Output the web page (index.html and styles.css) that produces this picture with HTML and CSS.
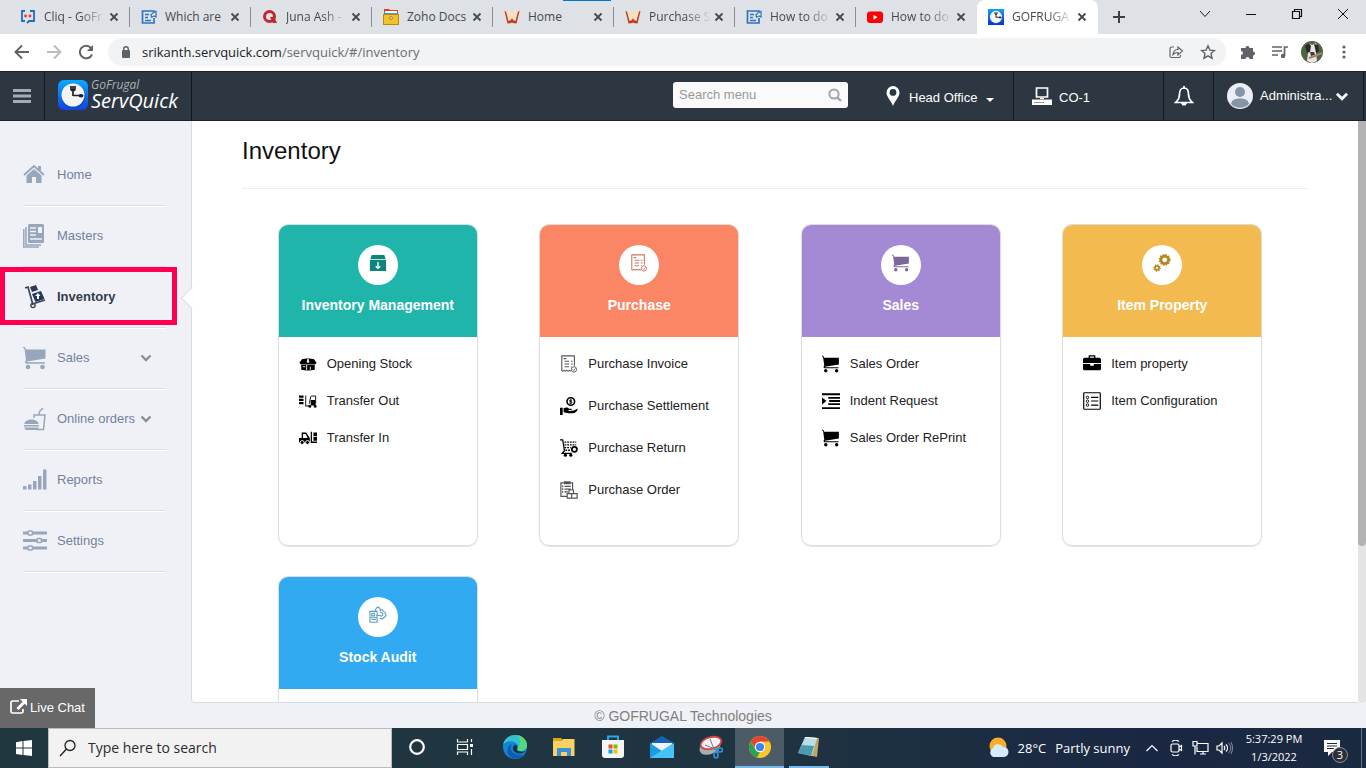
FILE: index.html
```html
<!DOCTYPE html>
<html lang="en">
<head>
<meta charset="utf-8">
<title>GOFRUGAL</title>
<link rel="stylesheet" href="styles.css">
</head>
<body>
<svg class="defs" aria-hidden="true">
  <symbol id="x" viewBox="0 0 10 10"><path d="M1.500 1.500l7 7M8.500 1.500l-7 7" fill="none" stroke="#45494d" stroke-width="1.800"/></symbol>
  <symbol id="cart" viewBox="0 0 24 24"><path d="M0 1.500c0-1 1.500-1 2 0L3 3.500h19.500v9L4 15.500v.8H22v1.400H3.500c-1 0-1.500-1-1.500-2l1-1.500L1.500 3z" fill="currentColor"/><circle cx="5" cy="21" r="2.300" fill="currentColor"/><circle cx="19.500" cy="21" r="2.300" fill="currentColor"/></symbol>
  <symbol id="chev" viewBox="0 0 12 8"><path d="M1.500 1.500L6 6l4.500-4.500" fill="none" stroke="currentColor" stroke-width="2.400"/></symbol>
  <symbol id="writer" viewBox="0 0 16 16"><path d="M13 9v5H1.500V2H13v1M4 5.500h4M4 8.500h3M4 11.500h6" fill="none" stroke="#2f74c0" stroke-width="1.700"/><path d="M15 2.500v5.500l-2-1-2.500 1-.5-2 2-2z" fill="#fff" stroke="#2f74c0" stroke-width="1.300"/></symbol>
  <symbol id="book" viewBox="0 0 16 16"><path d="M.5 2L3.500 14.500l4-.5.5-1 .5 1 4 .5L15.500 2l-1.500.5L11.500 12 9 11 8 9l-1 2-2.500 1L2 2.500z" fill="#c5391f"/><path d="M2.500 2L7 3l1 3 1-3 4.500-1L11 11.500 9 10 8 7.500 7 10l-2 1.500z" fill="#fbe0b4"/></symbol>
  <symbol id="invoice" viewBox="0 0 20 20"><path d="M12 18l-1.500-1L9 18l-1.500-1L6 18l-1.500-1L3 18l-1-.5V1h14v11M4 4h3M5 7h5M5 10h5M5 13h5M12 7h2M12 10h2M12 13h1" fill="none" stroke="currentColor" stroke-width="1.200"/><circle cx="15.500" cy="16" r="3" fill="none" stroke="currentColor"/><path d="M14 16l1.200 1.200 2-2.400" fill="none" stroke="currentColor"/></symbol>
  <symbol id="clockicon" viewBox="0 0 30 30"><circle cx="15.500" cy="16" r="12" fill="#0750be"/><circle cx="15" cy="15" r="11.500" fill="#f4f4f4"/><path d="M15 16V6M13 6v3c0 2 4 2 4 0V6M15 15.500h8" fill="none" stroke="#222" stroke-width="1.700"/><ellipse cx="23" cy="15.800" rx="2.500" ry="1.700" fill="#222"/></symbol>
</svg>

<div class="tabstrip">
  <div class="tabs">
    <div class="tab"><svg class="fav" viewBox="0 0 16 16"><path d="M5 2H2v10h3M10 2h4v10H9l-2 2" fill="none" stroke="#2a6bb3" stroke-width="1.800"/><circle cx="5.500" cy="7" r="1.400" fill="#e33"/><circle cx="10" cy="7" r="1.400" fill="#e33"/></svg><span class="tabname fade">Cliq - GoFr</span><button class="close" aria-label="Close"><svg><use href="#x"/></svg></button></div>
    <div class="tab"><svg class="fav"><use href="#writer"/></svg><span class="tabname">Which are</span><button class="close" aria-label="Close"><svg><use href="#x"/></svg></button></div>
    <div class="tab"><svg class="fav" viewBox="0 0 16 16"><circle cx="7.500" cy="7.500" r="5" fill="none" stroke="#c1272d" stroke-width="3"/><path d="M8 8h4l3 6h-4z" fill="#c1272d"/></svg><span class="tabname fade">Juna Ash -</span><button class="close" aria-label="Close"><svg><use href="#x"/></svg></button></div>
    <div class="tab"><svg class="fav" viewBox="0 0 16 16"><path d="M1 0h5l1 1h8v4H1z" fill="#e23b24"/><path d="M2 2h12v2H2z" fill="#fff"/><path d="M1 3l2 1h12v3H1z" fill="#27a5de"/><rect x=".5" y="5.500" width="15" height="10" fill="#f0c22e" stroke="#b98a0c"/><circle cx="8" cy="9" r="1.400" fill="#fff" stroke="#a47a12"/></svg><span class="tabname">Zoho Docs</span><button class="close" aria-label="Close"><svg><use href="#x"/></svg></button></div>
    <div class="tab"><svg class="fav"><use href="#book"/></svg><span class="tabname">Home</span><button class="close" aria-label="Close"><svg><use href="#x"/></svg></button></div>
    <div class="tab"><svg class="fav"><use href="#book"/></svg><span class="tabname fade">Purchase S</span><button class="close" aria-label="Close"><svg><use href="#x"/></svg></button></div>
    <div class="tab"><svg class="fav"><use href="#writer"/></svg><span class="tabname fade">How to do</span><button class="close" aria-label="Close"><svg><use href="#x"/></svg></button></div>
    <div class="tab last"><svg class="fav" viewBox="0 0 16 16"><rect y="2.500" width="16" height="11.500" rx="3" fill="#f00"/><path d="M6.500 5.700v5l4-2.500z" fill="#fff"/></svg><span class="tabname fade">How to do</span><button class="close" aria-label="Close"><svg><use href="#x"/></svg></button></div>
    <div class="tab active"><svg class="fav appfav"><use href="#clockicon"/></svg><span class="tabname fade">GOFRUGA</span><button class="close" aria-label="Close"><svg><use href="#x"/></svg></button></div>
  </div>
  <button class="newtab" aria-label="New tab"><svg width="14" height="14" viewBox="0 0 14 14"><path d="M7 1v12M1 7h12" stroke="#3c4043" stroke-width="2"/></svg></button>
  <div class="winbtns">
    <button aria-label="Tab list"><svg width="12" height="12" viewBox="0 0 12 12"><path d="M1 3l5 5.500L11 3" fill="none" stroke="#222"/></svg></button>
    <button aria-label="Minimize"><svg width="12" height="12" viewBox="0 0 12 12"><path d="M1 6.500h10" stroke="#111"/></svg></button>
    <button aria-label="Restore"><svg width="12" height="12" viewBox="0 0 12 12"><path d="M1.500 3.500h7v7h-7zM3.500 3V1.500h7v7H9" fill="none" stroke="#111" stroke-width="1.200"/></svg></button>
    <button aria-label="Close window"><svg width="12" height="12" viewBox="0 0 12 12"><path d="M1 1l10 10M11 1L1 11" stroke="#111"/></svg></button>
  </div>
  <span class="accent"></span>
</div>

<div class="toolbar">
  <button class="tool" aria-label="Back"><svg width="16" height="16" viewBox="0 0 16 16"><path d="M15 8H2M8 1.500L1.500 8 8 14.500" fill="none" stroke="#5f6368" stroke-width="1.900"/></svg></button>
  <button class="tool" aria-label="Forward"><svg width="16" height="16" viewBox="0 0 16 16"><path d="M1 8h13M8 1.500L14.500 8 8 14.500" fill="none" stroke="#babcbe" stroke-width="1.900"/></svg></button>
  <button class="tool" aria-label="Reload"><svg width="16" height="16" viewBox="0 0 16 16"><path d="M14 10.500A6.300 6.300 0 1 1 13 4" fill="none" stroke="#5f6368" stroke-width="2"/><path d="M15 1v6H9z" fill="#5f6368"/></svg></button>
  <div class="address">
    <svg width="10" height="14" viewBox="0 0 10 14"><rect x="1" y="5" width="8" height="8" rx="1" fill="#5f6368"/><path d="M2.700 6V4a2.300 2.300 0 0 1 4.600 0v2" fill="none" stroke="#5f6368" stroke-width="1.400"/></svg>
    <span class="url">srikanth.servquick.com<span class="path">/servquick/#/inventory</span></span>
    <button class="tool" aria-label="Share"><svg width="16" height="16" viewBox="0 0 16 16"><path d="M6 3H3.500C2.500 3 2 3.500 2 4.500v7.500c0 1 .5 1.500 1.500 1.500h7.500c1 0 1.500-.5 1.500-1.500v-1M5 10.500c.5-3.500 2.500-5 5-5V3l4.500 4L10 11V8.500C8 8.500 6.500 9 5 10.500z" fill="none" stroke="#5f6368" stroke-width="1.200"/></svg></button>
    <button class="tool" aria-label="Bookmark"><svg width="16" height="16" viewBox="0 0 16 16"><path d="M8 1.800l1.900 4.300 4.600.4-3.500 3.100 1 4.600L8 11.800l-4 2.400 1-4.600L1.500 6.500l4.600-.4z" fill="none" stroke="#5f6368" stroke-width="1.400"/></svg></button>
  </div>
  <button class="tool" aria-label="Extensions"><svg width="16" height="16" viewBox="0 0 16 16"><path d="M1 4h4.500a2 2 0 1 1 4 0H13v3.500a2 2 0 1 1 0 4V15H9.500a2 2 0 1 0-4 0H1v-4a2 2 0 1 0 0-4z" fill="#5f6368"/></svg></button>
  <button class="tool" aria-label="Media"><svg width="18" height="14" viewBox="0 0 18 14"><path d="M1 2h10M1 6h10M1 10h6" stroke="#5f6368" stroke-width="1.600"/><path d="M13.500 11V2H17" fill="none" stroke="#5f6368" stroke-width="1.700"/><circle cx="12" cy="11" r="2.200" fill="#5f6368"/></svg></button>
  <button class="tool" aria-label="Profile"><svg width="22" height="22" viewBox="0 0 22 22"><circle cx="11" cy="11" r="11" fill="#4d6442"/><path d="M5 5l3-3 3 2 4-2 2 4-2 5 1 9-5 2-5-2 1-8z" fill="#e6e3e2"/><path d="M4 5l4-3 2 3-1 6-3 1zM13 3l4 1 1 6-3 2-1-5z" fill="#29282b"/><path d="M9 11h4l1 3-4 1z" fill="#49383a"/><path d="M8 17l6-2 7-3" stroke="#a4816b" stroke-width="2" fill="none"/></svg></button>
  <button class="tool" aria-label="Menu"><svg width="4" height="16" viewBox="0 0 4 16"><g fill="#5f6368"><circle cx="2" cy="3" r="1.600"/><circle cx="2" cy="8" r="1.600"/><circle cx="2" cy="13" r="1.600"/></g></svg></button>
</div>

<header class="appbar">
  <button class="burger" aria-label="Toggle menu"><svg width="18" height="14" viewBox="0 0 18 14"><path d="M0 1.500h18M0 7h18M0 12.500h18" stroke="#a3adb7" stroke-width="2.800"/></svg></button>
  <a class="logo" href="#"><svg class="logomark"><use href="#clockicon"/></svg><span class="logotext"><small>GoFrugal</small><b>ServQuick</b></span></a>
  <form class="search"><input type="text" placeholder="Search menu" aria-label="Search menu"><button type="button" aria-label="Search"><svg width="14" height="14" viewBox="0 0 14 14"><circle cx="6" cy="6" r="4.600" fill="none" stroke="#a0a7ad" stroke-width="2"/><path d="M9.300 9.300L13 13" stroke="#a0a7ad" stroke-width="2.400"/></svg></button></form>
  <button class="location"><svg width="14" height="20" viewBox="0 0 14 20"><path fill-rule="evenodd" d="M7 0a6.500 6.500 0 0 1 6.500 6.500C13.500 11 9 14.500 7 20 5 14.500.5 11 .5 6.500A6.500 6.500 0 0 1 7 0zm0 3a3.400 3.400 0 1 0 0 6.800A3.400 3.400 0 0 0 7 3z" fill="#fff"/></svg><span>Head Office</span><i class="caret"></i></button>
  <button class="counter"><svg width="20" height="18" viewBox="0 0 20 18"><path d="M4.500 1h11v9h-11z" fill="none" stroke="#fff" stroke-width="1.700"/><path d="M8 11h4v1H8z" fill="#fff"/><path d="M0 12.500h20V18H0z" fill="#fff"/><path d="M2 15.500h10" stroke="#999"/></svg><span>CO-1</span></button>
  <button class="bell" aria-label="Notifications"><svg width="20" height="22" viewBox="0 0 20 22"><path d="M3 16c2-2 2.500-4 2.500-7 0-4 2-6 4.500-6s4.500 2 4.500 6c0 3 .5 5 2.500 7l1.500 1.500h-17z" fill="none" stroke="#fff" stroke-width="1.700"/><path d="M9 1h2v3H9zM7 18h6l-1.500 2.500h-3z" fill="#fff"/></svg></button>
  <button class="user"><svg width="26" height="26" viewBox="0 0 26 26"><circle cx="13" cy="13" r="13" fill="#eceef4"/><circle cx="13" cy="9" r="5" fill="#8495a8"/><path d="M4 21c1-5 5-5.500 9-5.500s8 .5 9 5.500a12.500 12.500 0 0 1-18 0z" fill="#8495a8"/></svg><span>Administra...</span><svg class="userchev"><use href="#chev"/></svg></button>
</header>

<div class="workspace">
  <nav class="sidebar">
    <a href="#"><svg viewBox="0 0 24 24"><path d="M1 12L11 3l10 9" fill="none" stroke="currentColor" stroke-width="1.900"/><path d="M15 3h3v5l-3-2z" fill="currentColor"/><path d="M3.500 12.500L11 6l7.500 6.500V20H13v-6H9v6H3.500z" fill="currentColor"/></svg><span>Home</span></a>
    <a href="#"><svg viewBox="0 0 24 24"><path d="M.8 5v18H16M3 3v18h15" fill="none" stroke="currentColor" stroke-width="1.500"/><rect x="5" y="0" width="16" height="19" rx="1.500" fill="currentColor"/><path d="M7 4h6M7 7.500h6M7 11h6M7 15h12" stroke="#f0f1f7" stroke-width="1.300"/><rect x="15" y="3" width="4" height="6" fill="#f0f1f7"/></svg><span>Masters</span></a>
    <a href="#" class="current"><svg viewBox="0 0 24 24"><path d="M2 3l3-1 5 18M11 18.500l11-3.500" fill="none" stroke="#3b4452" stroke-width="1.700"/><path d="M7 2l6-2 2 5-6 2z" fill="#2b3954"/><path d="M9 9l9-3 3.500 8-9 3z" fill="#21375c"/><path d="M14 14v-3h-2l3-3 2.500 3H16v3z" fill="#fff"/><circle cx="10" cy="20.500" r="2.100" fill="none" stroke="#3b4452" stroke-width="1.400"/></svg><span>Inventory</span></a>
    <a href="#"><svg><use href="#cart"/></svg><span>Sales</span><svg class="more"><use href="#chev"/></svg></a>
    <a href="#"><svg viewBox="0 0 24 24"><path d="M11 11V8h11l-1.500 14.500H14M15.500 8L17 4l3-3" fill="none" stroke="currentColor" stroke-width="1.500"/><path d="M1.500 17c0-6 14-6 14 0zM1 18h15v1.500H1zM1.500 20.500h14c0 2-1 2.500-3 2.500h-8c-2 0-3-.5-3-2.500z" fill="currentColor"/></svg><span>Online orders</span><svg class="more"><use href="#chev"/></svg></a>
    <a href="#"><svg viewBox="0 0 24 24"><path d="M0 18h3.500v3.500H0zM5 16.500h3.500v5H5zM10 13h3.500v8.500H10zM15 8h3.500v13.500H15zM20 1.500h3.500v20H20z" fill="currentColor"/></svg><span>Reports</span></a>
    <a href="#"><svg viewBox="0 0 24 24"><path d="M0 4h24M0 11.500h24M0 19h24" stroke="currentColor" stroke-width="3"/><g fill="#f0f1f7" stroke="currentColor" stroke-width="1.600"><rect x="5" y="2" width="4.500" height="4" rx="1"/><rect x="14" y="9.500" width="4.500" height="4" rx="1"/><rect x="5" y="17" width="4.500" height="4" rx="1"/></g></svg><span>Settings</span></a>
  </nav>
  <span class="marker"></span>

  <main>
    <h1>Inventory</h1>
    <div class="cards">
      <section class="card teal">
        <div class="head"><span class="disc"><svg viewBox="0 0 20 20"><path d="M3 1h14l1.500 4.500h-17zM1 6.500h18V19H1z" fill="#10837b"/><path d="M10 9v7M7.500 13.500L10 16l2.500-2.500" fill="none" stroke="#fff" stroke-width="1.500"/></svg></span><h2>Inventory Management</h2></div>
        <ul>
          <li><a href="#"><svg viewBox="0 0 20 20"><path d="M3.500 4.500c3-1 10-1 13 0l3 4-1.500 2H2L.5 8.500zM2.500 11h15v5.500c-4 1-11 1-15 0z"/><path d="M10 4.500L9 8h2zM8.500 11v6M12.500 13v3.500M4.500 13H7" stroke="#fff" fill="#fff"/></svg>Opening Stock</a></li>
          <li><a href="#"><svg viewBox="0 0 20 20"><path d="M0 4h5v2.500H0zM0 7.500h5V10H0zM0 11h5v2.500H0zM7 4h1v11h5v1H7zM13 9h5v6h-5z"/><path d="M11.500 13L13 5l1-.5h4.500V14" fill="none" stroke="#000"/><circle cx="12" cy="16" r="1.600"/><circle cx="18" cy="16" r="1.600"/></svg>Transfer Out</a></li>
          <li><a href="#"><svg viewBox="0 0 20 20"><path d="M0 10h3V4h5l4 6v5H0zM13 3h1.500v11H20v1.500h-7zM16 4h4v4h-4zM16 9h4v4h-4z"/><path d="M4.500 5.500h3L9.500 10h-5z" fill="#fff"/><circle cx="3.500" cy="15" r="2.200" stroke="#fff"/><circle cx="9.500" cy="15" r="2.200" stroke="#fff"/></svg>Transfer In</a></li>
        </ul>
      </section>
      <section class="card coral">
        <div class="head"><span class="disc"><svg class="clay"><use href="#invoice"/></svg></span><h2>Purchase</h2></div>
        <ul class="roomy">
          <li><a href="#"><svg class="grey"><use href="#invoice"/></svg>Purchase Invoice</a></li>
          <li><a href="#"><svg viewBox="0 0 20 20"><path d="M0 12h3v8H0zM4 12.500c3-1.500 5-.5 6 .5h3v1.500H9l1 1 5-.5 4.500-2c1 1-2 4-4 5H9l-5-1z"/><circle cx="12" cy="5" r="4.200" fill="#fff" stroke="#000" stroke-width="1.800"/><path d="M13.500 3.500h-2.200c-1 0-1 1.500 0 1.500h1c1.200 0 1.200 1.800 0 1.800h-2M12 2.500v5.300" fill="none" stroke="#000"/></svg>Purchase Settlement</a></li>
          <li><a href="#"><svg viewBox="0 0 20 20"><path d="M0 1h3l2 12-2.500 3H13" fill="none" stroke="#000" stroke-width="1.400"/><path d="M5 3.500h13M5 6.500h13M5 9.500h7M6 12.500h5" stroke="#000" stroke-width="1.500" stroke-dasharray="2 1"/><circle cx="6" cy="18" r="1.800"/><circle cx="12" cy="18" r="1.800"/><circle cx="16" cy="11.500" r="2.800" fill="#fff" stroke="#000" stroke-width="2"/></svg>Purchase Return</a></li>
          <li><a href="#"><svg class="grey" viewBox="0 0 20 20"><path d="M8 17H1V2h13v8M5 1h6v2H5zM5 6h7M5 9h7M5 12h4M3 5v2M3 8v2M3 11v2M8 19v-5h5v5zM13 19v-5h6v5zM10 14v-4h5v4z" fill="none" stroke="currentColor" stroke-width="1.300"/></svg>Purchase Order</a></li>
        </ul>
      </section>
      <section class="card violet">
        <div class="head"><span class="disc"><svg class="plum"><use href="#cart"/></svg></span><h2>Sales</h2></div>
        <ul>
          <li><a href="#"><svg><use href="#cart"/></svg>Sales Order</a></li>
          <li><a href="#"><svg viewBox="0 0 20 20"><path d="M0 2.500h20M7 6.500h13M8 10h12M7 13.500h13M0 18h20" stroke="#000" stroke-width="2"/><path d="M0 6l5 4-5 4z"/></svg>Indent Request</a></li>
          <li><a href="#"><svg><use href="#cart"/></svg>Sales Order RePrint</a></li>
        </ul>
      </section>
      <section class="card amber">
        <div class="head"><span class="disc"><svg viewBox="0 0 20 20" fill="none" stroke="#b8861d"><circle cx="13" cy="6.500" r="4.200" stroke-width="3"/><circle cx="13" cy="6.500" r="5.900" stroke-width="1.400" stroke-dasharray="1.700 1.389"/><circle cx="4.500" cy="15.500" r="2.200" stroke-width="2"/><circle cx="4.500" cy="15.500" r="3.500" stroke-width="1.300" stroke-dasharray="1.300 1.449"/></svg></span><h2>Item Property</h2></div>
        <ul>
          <li><a href="#"><svg viewBox="0 0 20 20"><path d="M7 3.500V1h6v2.500" fill="none" stroke="#000" stroke-width="1.400"/><path d="M2 3h16c1 0 2 1 2 2v4H0V5c0-1 1-2 2-2zM0 10h8v2h4v-2h8v5.500c0 1-1 1.500-2 1.500H2c-1 0-2-.5-2-1.500z"/></svg>Item property</a></li>
          <li><a href="#"><svg viewBox="0 0 20 20" fill="none" stroke="#000"><rect x=".8" y=".8" width="18.400" height="18.400" rx="1" stroke-width="1.300"/><path d="M9 6h8M9 10h8M9 14.500h8" stroke-width="1.300"/><circle cx="5" cy="6" r="1.400"/><circle cx="5" cy="10.200" r="1.400"/><circle cx="5" cy="14.500" r="1.400"/></svg>Item Configuration</a></li>
        </ul>
      </section>
      <section class="card blue">
        <div class="head"><span class="disc"><svg viewBox="0 0 20 20" fill="none" stroke="#5f9fc4" stroke-width="1.200"><path d="M1 6h8v12H1zM3 8h3v3H3zM1 13h8M3 15h5M7 6c0-3 1-4 3-5 2 1 3 2 3 5M8 10.500h5"/><path d="M12 5l3-1 1 2 2 1v2l1 1-1 2-2 1-1 1.500-3-1"/><path d="M12.500 7.500a2 2 0 1 1 0 3.500"/></svg></span><h2>Stock Audit</h2></div>
        <ul></ul>
      </section>
    </div>
  </main>
  <div class="scroll"><span></span></div>
</div>

<footer>© GOFRUGAL Technologies<button class="chat"><svg width="17" height="15" viewBox="0 0 17 15"><path d="M9 2H2.500C1.500 2 1 2.500 1 3.500v9c0 1 .5 1.500 1.500 1.500h9c1 0 1.500-.5 1.500-1.500V10" fill="none" stroke="#fff" stroke-width="1.700"/><path d="M10 0h7v7l-2.300-2.300L8.500 11 6.500 9l6-6.300z" fill="#fff"/></svg>Live Chat</button></footer>

<div class="taskbar">
  <button class="start" aria-label="Start"><svg width="16" height="16" viewBox="0 0 16 16"><path d="M0 2.200L6.500 1v6.500H0zM7.500.9L16 0v7.500H7.500zM0 8.500h6.500V15L0 14zM7.500 8.500H16V16l-8.500-1z" fill="#fff"/></svg></button>
  <label class="find"><svg width="18" height="18" viewBox="0 0 18 18"><circle cx="11" cy="6.500" r="5" fill="none" stroke="#222" stroke-width="1.300"/><path d="M7.500 10L1 17" stroke="#222" stroke-width="1.400"/></svg><input type="text" placeholder="Type here to search" aria-label="Type here to search"></label>
  <div class="apps">
    <button aria-label="Cortana"><svg viewBox="0 0 24 24"><circle cx="12" cy="12" r="6.800" fill="none" stroke="#fff" stroke-width="2.200"/></svg></button>
    <button aria-label="Task view"><svg viewBox="0 0 24 24" fill="none" stroke="#fff" stroke-width="1.200"><path d="M3.500 4v3h10V4M3.500 20v-3h10v3M3.500 9.500h10v5h-10zM17.500 4v3M17.500 14v6"/><path d="M16 9h3v3h-3z" fill="#fff" stroke="none"/></svg></button>
    <button aria-label="Edge"><svg viewBox="0 0 24 24"><circle cx="12" cy="12" r="12" fill="#1684d4"/><path d="M0 10C1 4 6 0 12 0c7 0 12 5 12 10 0 4-3 6-6 6-2 0-4-.5-4-2 2-2 1-5-2-6.500C8 5.500 3 6 0 10z" fill="#31c3cf"/><path d="M14 0c6 1 10 5 10 10 0 4-3 6-6 6-2 0-4-.5-4-2 4-3 4-10 0-14z" fill="#5fdd65" opacity=".8"/><path d="M9 9c-4 6 2 13 13 11-6 6-16 5-17.500-3C4 13 6 10 9 9z" fill="#0d5eb3"/><path d="M12 9.500c-4 3-2 8 3 9 3 .5 6-.5 7.500-2.500-4 1.500-8.500.5-8.500-1.500 1-1.500.5-4-2-5z" fill="#183341"/></svg></button>
    <button aria-label="File Explorer"><svg viewBox="0 0 24 24"><path d="M1 3h8l2 2h11v6H1z" fill="#e0a420"/><path d="M1 6h9l1-2h11.500v17H1z" fill="#fbd261"/><path d="M5 13h14v8h-4v-4H9v4H5z" fill="#3c91d8"/></svg></button>
    <button aria-label="Store"><svg viewBox="0 0 24 24"><path d="M7 6V1.500h10V6" fill="none" stroke="#2ba8e8" stroke-width="2"/><path d="M1 5h22v15c0 2-1 3-3 3H4c-2 0-3-1-3-3z" fill="#f5f5f5"/><path d="M7.500 9.500h4v4h-4z" fill="#f25022"/><path d="M12.500 9.500h4v4h-4z" fill="#7fba00"/><path d="M7.500 14.500h4v4h-4z" fill="#00a4ef"/><path d="M12.500 14.500h4v4h-4z" fill="#ffb900"/></svg></button>
    <button aria-label="Mail"><svg viewBox="0 0 24 24"><path d="M0 8l12-7 12 7v4H0z" fill="#1464b1"/><path d="M2 8h20v9H2z" fill="#f2f6fa"/><path d="M0 8l12 8L24 8v15H0z" fill="#1c9be2"/><path d="M24 8L0 23h24z" fill="#48c2f4"/></svg></button>
    <button aria-label="Snipping Tool"><svg viewBox="0 0 24 24"><ellipse cx="11" cy="12" rx="11" ry="7" transform="rotate(-25 11 12)" fill="#a8afb4"/><ellipse cx="12" cy="8" rx="10.500" ry="5.800" transform="rotate(-15 12 8)" fill="#f4f4f4" stroke="#d64444" stroke-width="1.800"/><path d="M6 10l10 4M11 4l4 10" stroke="#777"/><g fill="none" stroke="#2f91d0" stroke-width="1.700"><ellipse cx="21" cy="15" rx="2.500" ry="2"/><ellipse cx="17" cy="20" rx="2" ry="3"/><path d="M15 14l4 1-2 3"/></g></svg></button>
    <button class="on" aria-label="Chrome"><svg viewBox="0 0 24 24"><circle cx="12" cy="12" r="11" fill="#fbc52e"/><path d="M2.500 6.500a11 11 0 0 1 19 0H12L8 14z" fill="#e24435"/><path d="M2.500 6.500L8 15l4 2-3 5.600A11 11 0 0 1 2.500 6.500z" fill="#2da14f"/><circle cx="12" cy="12" r="5.200" fill="#fff"/><circle cx="12" cy="12" r="4.100" fill="#3e82f0"/></svg></button>
    <button class="open" aria-label="Notepad"><svg viewBox="0 0 24 24"><path d="M9 2l13 1-2 19-5-1z" fill="#c3a562"/><path d="M8 2l12 1-5 18-14-3z" fill="#b5dfe4"/><path d="M5 10l12 1-3 10-13-3z" fill="#4a9cac"/><path d="M8 2l12 1v1L8 3z" fill="#fff"/></svg></button>
  </div>
  <div class="tray">
    <button class="weather"><svg width="22" height="22" viewBox="0 0 22 22"><circle cx="11" cy="9" r="8.500" fill="#f9ae25"/><path d="M6 20a5 5 0 0 1 0-9 5.500 5.500 0 0 1 10-1 5 5 0 0 1 1 10z" fill="#d5eafb"/></svg><span>28°C</span><span>Partly sunny</span></button>
    <button aria-label="Hidden icons"><svg width="12" height="8" viewBox="0 0 12 8"><path d="M.5 7L6 1.500 11.500 7" fill="none" stroke="#fff" stroke-width="1.200"/></svg></button>
    <button aria-label="Meet"><svg width="14" height="16" viewBox="0 0 14 16"><path d="M3.500 4h5c1 0 1.500.5 1.500 1.500v5c0 1-.5 1.500-1.500 1.500h-5C2.500 12 2 11.500 2 10.500v-5C2 4.500 2.500 4 3.500 4zM10 7l2.500-1.500v5L10 9M3 1.500c2-1.500 5-1.500 7 0M3 14.500c2 1.500 5 1.500 7 0" fill="none" stroke="#fff" stroke-width="1.200"/></svg></button>
    <button aria-label="Network"><svg width="17" height="14" viewBox="0 0 17 14"><path d="M5 2.500h11v8H5V6M1 .5h4V5H1zM3 5v8.500M8 13h6M11 10.500V13" fill="none" stroke="#fff" stroke-width="1.200"/></svg></button>
    <button aria-label="Volume"><svg width="17" height="14" viewBox="0 0 17 14"><path d="M1 5h2l3-3v10L3 9H1zM8 5c1 1 1 3 0 4M10 3.500c2 2 2 5 0 7" fill="none" stroke="#fff" stroke-width="1.200"/><path d="M12.500 2c3 3 3 7 0 10M15 1c2 4 2 8 0 12" fill="none" stroke="#8390a0"/></svg></button>
    <div class="clock"><time>5:37:29 PM</time><time>1/3/2022</time></div>
    <button class="notes" aria-label="3 notifications"><svg width="17" height="17" viewBox="0 0 17 17"><path d="M0 0h16v12H8l-4 4v-4H0z" fill="#fff"/><path d="M3 3.500h10M3 6h10M3 8.500h7" stroke="#1c2c42"/></svg><span>3</span></button>
  </div>
</div>
</body>
</html>
```
FILE: styles.css
```css
*, ::before, ::after { box-sizing: border-box; }
body {
  margin: 0;
  height: 100vh;
  overflow: hidden;
  display: flex;
  flex-direction: column;
  background: #f0f1f7;
  font: 13px/16px "Liberation Sans", Arial, sans-serif;
}
button {
  margin: 0;
  padding: 0;
  border: 0;
  background: none;
  color: inherit;
  font: inherit;
  display: flex;
  align-items: center;
  justify-content: center;
}
svg { display: block; flex: none; }
a { color: inherit; text-decoration: none; }
.defs { position: absolute; width: 0; height: 0; }

/* Browser tabs */
.tabstrip {
  position: relative;
  flex: none;
  height: 34px;
  display: flex;
  background: #dee1e6;
  font: 12px/16px "Open Sans", "Noto Sans", sans-serif;
  color: #45494d;
}
.accent {
  position: absolute;
  left: 563px;
  top: 0;
  width: 48px;
  height: 1px;
  background: #0078d7;
}
.tabs { display: flex; padding-left: 9px; }
.tab {
  width: 121px;
  display: flex;
  align-items: center;
  padding: 0 11px;
  background: linear-gradient(#8b8e93, #8b8e93) right 0 top 7px / 1px 20px no-repeat;
}
.tab.last { background: none; }
.tab.active { background: #fff; border-radius: 8px 8px 0 0; }
.fav { width: 16px; height: 16px; }
.appfav { background: linear-gradient(#0aa5fb, #0a2fd8); }
.tabname {
  flex: 1;
  min-width: 0;
  margin: 0 2px 0 8px;
  white-space: nowrap;
}
.fade {
  -webkit-mask-image: linear-gradient(90deg, #000 36px, transparent 62px);
  mask-image: linear-gradient(90deg, #000 36px, transparent 62px);
}
.close svg { width: 10px; height: 10px; }
.newtab { width: 42px; }
.winbtns { margin-left: auto; display: flex; }
.winbtns button { width: 46px; height: 28px; }

/* Browser toolbar */
.toolbar {
  flex: none;
  height: 37px;
  display: flex;
  align-items: center;
  padding: 0 6px 1px;
  background: #fff;
}
.tool { width: 32px; height: 28px; }
.address {
  flex: 1;
  height: 28px;
  display: flex;
  align-items: center;
  margin: 0 6px;
  padding: 0 2px 0 13px;
  border-radius: 14px;
  background: #f1f3f4;
  font: 13px/20px "Open Sans", "Noto Sans", sans-serif;
  color: #202124;
}
.url { flex: 1; margin-left: 11px; }
.path { color: #6a6e72; }

/* Application header */
.appbar {
  flex: none;
  height: 50px;
  display: flex;
  align-items: stretch;
  padding-right: 2px;
  background: #2d3741;
  border: solid #1b2229;
  border-width: 1px 0;
  color: #fff;
}
.appbar > button, .appbar > a { border-right: 1px solid #12181e; }
.burger { width: 45px; }
.logo { width: 147px; padding: 0 0 2px 13px; display: flex; align-items: center; gap: 3px; }
.logomark {
  width: 30px;
  height: 30px;
  border-radius: 6px;
  background: linear-gradient(#0aa9fd, #1740e4);
}
.logotext {
  display: flex;
  flex-direction: column;
  font-family: "Open Sans", "Noto Sans", sans-serif;
  font-style: italic;
}
.logotext small { font-size: 12px; line-height: 12px; color: #aab0b6; }
.logotext b { font-size: 20px; line-height: 20px; font-weight: 400; }
.search {
  width: 175px;
  height: 26px;
  margin: 10px 0 0 auto;
  padding: 0 6px;
  display: flex;
  align-items: center;
  background: #fafafa;
  border-radius: 3px;
}
.search input { width: 100%; min-width: 0; border: 0; padding: 0; background: none; font: inherit; outline: 0; }
.search input::placeholder { color: #999; }
.location { width: 166px; gap: 9px; padding: 0 18px 0 38px; }
.appbar > .location, .appbar > .counter, .appbar > .user { justify-content: flex-start; }
.location span, .counter span { padding-top: 4px; }
.caret { margin-top: 8px; border: 4px solid transparent; border-top-color: #fff; border-bottom: 0; }
.counter { width: 150px; padding-left: 18px; gap: 7px; }
.bell { width: 50px; padding-right: 9px; }
.user { width: 150px; padding-left: 13px; gap: 7px; }
.userchev { width: 14px; height: 9px; margin-left: -4px; }

/* Workspace */
.workspace {
  position: relative;
  flex: 1;
  min-height: 0;
  display: flex;
}
.sidebar { flex: none; width: 191px; padding: 24px 25px 0 23px; color: #71829d; }
.sidebar a {
  height: 61px;
  display: flex;
  align-items: center;
  gap: 10px;
  border-bottom: 1px solid #d9dfe7;
  box-shadow: 0 1px #fff;
}
.sidebar svg { width: 24px; height: 24px; color: #97a6ba; }
.sidebar .more { width: 12px; height: 8px; margin-left: auto; margin-right: 14px; color: #8e8e8e; }
.sidebar span { white-space: nowrap; }
.sidebar a:has(.more) span { margin-right: -10px; }
.sidebar .current { position: relative; color: #333c49; font-weight: 700; }
.current::before {
  content: "";
  position: absolute;
  left: -23px;
  right: -11px;
  top: 0;
  height: 58px;
  border: 5px solid #ff0050;
}
.marker {
  position: absolute;
  z-index: 1;
  left: 184px;
  top: 169px;
  width: 16px;
  height: 16px;
  background: #fff;
  border: solid #d5dde4;
  border-width: 0 0 1px 1px;
  transform: rotate(45deg);
}
main {
  flex: 1;
  min-width: 0;
  overflow: hidden;
  padding: 0 50px;
  background: #fff;
  border: solid #d5dde4;
  border-width: 0 0 1px 1px;
  border-radius: 0 0 0 4px;
}
h1 {
  margin: 0 0 35px;
  padding: 14px 0 21px;
  border-bottom: 1px solid #eee;
  font-size: 24px;
  line-height: 32px;
  font-weight: 400;
  color: #111;
}
.scroll { flex: none; width: 8px; background: #e4e4e4; border-radius: 0 0 4px 4px; }
.scroll span { display: block; height: 73%; border-radius: 0 0 4px 4px; background: #b3b3b3; }

/* Cards */
.cards {
  display: grid;
  grid-template-columns: repeat(4, 1fr);
  justify-items: center;
  row-gap: 30px;
  padding: 0 15px 0 5px;
}
.card {
  width: 200px;
  height: 322px;
  border: 1px solid #dcdcdc;
  border-radius: 10px;
  box-shadow: 0 1px 1px #e4e4e4;
  overflow: hidden;
}
.head {
  height: 112px;
  padding-top: 20px;
  display: flex;
  flex-direction: column;
  align-items: center;
  gap: 12px;
  color: #fff;
}
.teal .head { background: #20b5ab; }
.coral .head { background: #fb8665; }
.violet .head { background: #a48ad4; }
.amber .head { background: #f3ba4f; }
.blue .head { background: #31aaf2; }
h2 { margin: 0; font-size: 14px; line-height: 16px; }
.disc {
  width: 40px;
  height: 40px;
  padding-bottom: 4px;
  display: flex;
  align-items: center;
  justify-content: center;
  border-radius: 50%;
  background: #fff;
}
.disc svg, li svg { width: 18px; height: 18px; }
.clay { color: #c57967; }
.plum { color: #7c6896; }
.card ul {
  margin: 0;
  padding: 18px 20px;
  list-style: none;
  display: flex;
  flex-direction: column;
  gap: 19px;
}
.card .roomy { gap: 24px; }
li a { display: flex; align-items: center; gap: 10px; height: 18px; color: #222; }
li svg { color: #000; }
li .grey { color: #555; }

/* Page footer */
footer {
  position: relative;
  flex: none;
  height: 25px;
  text-align: center;
  font-size: 14px;
  line-height: 26px;
  color: #808080;
}
.chat {
  position: absolute;
  left: 0;
  bottom: 0;
  width: 95px;
  height: 40px;
  gap: 3px;
  background: #686868;
  color: #fff;
  font-size: 13px;
  line-height: 16px;
}
.chat svg { margin-bottom: 4px; }

/* Taskbar */
.taskbar {
  flex: none;
  height: 40px;
  display: flex;
  background: linear-gradient(90deg, #20373f, #1f3441 55%, #1a2743 85%, #1a2a40);
  font-family: "Open Sans", "Noto Sans", sans-serif;
  color: #fff;
}
.start { width: 48px; }
.find {
  width: 344px;
  display: flex;
  align-items: center;
  gap: 11px;
  padding-left: 10px;
  background: #f2f2f2;
  border: 1px solid #bbb;
}
.find input { flex: 1; min-width: 0; border: 0; padding: 0; background: none; outline: 0; font: 14px/20px "Open Sans", "Noto Sans", sans-serif; }
.find input::placeholder { color: #2b2b2b; }
.apps { display: flex; }
.apps button { width: 49px; border-bottom: 2px solid transparent; }
.apps svg { width: 24px; height: 24px; }
.apps .on { background: #4c5c67; border-color: #76b9ed; }
.apps .open { background: linear-gradient(#76b9ed, #76b9ed) center bottom / 40px 2px no-repeat border-box; }
.tray { margin-left: auto; display: flex; align-items: stretch; padding-right: 4px; }
.tray > button { width: 24px; }
.tray .weather { width: auto; gap: 9px; margin-right: 10px; font-size: 13px; line-height: 20px; }
.clock {
  width: 76px;
  display: flex;
  flex-direction: column;
  justify-content: center;
  text-align: center;
  font-size: 11px;
  line-height: 18px;
}
.tray .notes { position: relative; width: 50px; padding-right: 8px; border-right: 1px solid #64707f; }
.notes span {
  position: absolute;
  left: 20px;
  top: 19px;
  width: 16px;
  height: 16px;
  border: 1px solid #8c9096;
  border-radius: 50%;
  background: #2d3037;
  font-size: 11px;
  line-height: 14px;
}
```
